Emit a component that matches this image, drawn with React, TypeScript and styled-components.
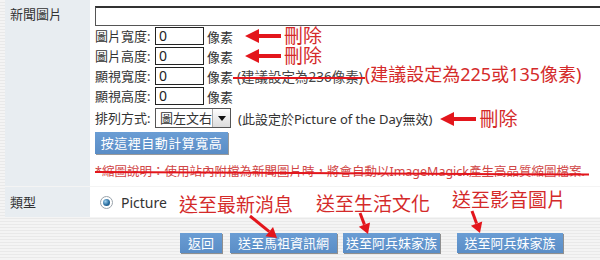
import React from "react";
import styled, { createGlobalStyle } from "styled-components";

const GlobalStyle = createGlobalStyle`
  html, body {
    margin: 0;
    padding: 0;
  }
  body {
    font-family: "Noto Sans", "Noto Sans CJK TC", sans-serif;
    font-size: 13px;
    color: #333;
    background: repeating-linear-gradient(#f4f4f4 0 2px, #e9e9e9 2px 3px);
  }
`;

const Page = styled.div`
  position: relative;
  width: 600px;
  height: 260px;
  overflow: hidden;
`;

const FormTable = styled.div`
  margin-left: 5px;
  display: grid;
  grid-template-columns: 85px 1fr;
  row-gap: 1px;
`;

const LabelCell = styled.div<{ $top: number }>`
  background: #e8edf1;
  padding: ${(p) => p.$top}px 0 0 5px;
  line-height: 19px;
  color: #333;
`;

const ValueCell = styled.div`
  background: #fff;
  padding: 6px 0 6px 5px;
  display: flex;
  flex-direction: column;
  align-items: flex-start;
  overflow: hidden;
`;

const TypeCell = styled.div`
  background: #fff;
  height: 30px;
  padding-left: 10px;
  display: flex;
  align-items: center;
`;

const WideInput = styled.div`
  box-sizing: border-box;
  width: 540px;
  height: 20px;
  border: 1px solid #555;
  border-top: 2px solid #333;
  background: #fff;
`;

const FieldRow = styled.div<{ $h?: number }>`
  display: flex;
  align-items: center;
  height: ${(p) => p.$h ?? 20}px;
  white-space: nowrap;
`;

const FieldLabel = styled.span`
  width: 60px;
  line-height: 18px;
`;

const SmallInput = styled.div`
  box-sizing: border-box;
  width: 49px;
  height: 18px;
  border: 1px solid #222;
  padding-left: 3px;
  line-height: 16px;
  font-size: 14px;
  color: #222;
  background: #fff;
`;

const Unit = styled.span`
  margin-left: 3px;
  color: #333;
`;

const Struck = styled.span`
  position: relative;
  margin-left: 4px;
  margin-right: 2px;
  color: #444;
  font-size: 13.5px;
  &::after {
    content: "";
    position: absolute;
    left: -4px;
    right: -2px;
    top: 11px;
    height: 2px;
    background: #e3161c;
  }
`;

const RedNote = styled.span<{ $size: number; $ml?: number; $dy?: number }>`
  color: #d42a2a;
  font-size: ${(p) => p.$size}px;
  line-height: 20px;
  margin-left: ${(p) => p.$ml ?? 0}px;
  position: relative;
  top: ${(p) => p.$dy ?? 0}px;
  white-space: nowrap;
`;

const Select = styled.div`
  box-sizing: border-box;
  width: 76px;
  height: 20px;
  border: 1px solid #555;
  display: flex;
  align-items: stretch;
  background: #fff;
`;

const SelectText = styled.span`
  flex: 1;
  padding-left: 4px;
  line-height: 18px;
  color: #333;
`;

const SelectButton = styled.span`
  width: 17px;
  border-left: 1px solid #aaa;
  background: linear-gradient(#fdfdfd, #dcdcdc);
  display: flex;
  align-items: center;
  justify-content: center;
  &::before {
    content: "";
    border-left: 4px solid transparent;
    border-right: 4px solid transparent;
    border-top: 5px solid #111;
  }
`;

const Hint = styled.span`
  margin-left: 7px;
  color: #333;
`;

const DeleteMark = styled.span<{ $ml: number; $dy?: number }>`
  display: inline-flex;
  align-items: center;
  margin-left: ${(p) => p.$ml}px;
  position: relative;
  top: ${(p) => p.$dy ?? 0}px;
  gap: 3px;
`;

const CalcButton = styled.div`
  margin-top: 2px;
  height: 22px;
  width: 133px;
  background: linear-gradient(#6a9dd4, #5a8dc6);
  box-shadow: 1px 1px 0 #9a9a9a;
  color: #fff;
  line-height: 22px;
  text-align: center;
  letter-spacing: 0.5px;
`;

const NoteLine = styled.div`
  position: relative;
  margin-top: 10px;
  line-height: 16px;
  font-size: 12.5px;
  color: #d04545;
  white-space: nowrap;
  &::after {
    content: "";
    position: absolute;
    left: 0;
    right: -4px;
    top: 7px;
    height: 2px;
    background: #e3161c;
    transform: rotate(0.3deg);
    transform-origin: left center;
  }
`;

const Radio = styled.span`
  box-sizing: border-box;
  width: 13px;
  height: 13px;
  border-radius: 50%;
  border: 1px solid #9aa3ab;
  background: #fff;
  display: inline-flex;
  align-items: center;
  justify-content: center;
  &::before {
    content: "";
    width: 7px;
    height: 7px;
    border-radius: 50%;
    background: radial-gradient(circle at 35% 35%, #9fd0ee, #2a6ea0 55%, #16456b);
  }
`;

const RadioText = styled.span`
  margin-left: 8px;
  font-size: 14px;
  color: #333;
`;

const ButtonBar = styled.div`
  display: flex;
  margin-top: 16px;
  padding-left: 180px;
`;

const ActionButton = styled.div<{ $w: number; $ml?: number }>`
  width: ${(p) => p.$w}px;
  height: 20px;
  margin-left: ${(p) => p.$ml ?? 0}px;
  background: linear-gradient(#6a9dd4, #5a8dc6);
  box-shadow: 1px 1px 0 #8f8f8f;
  color: #fff;
  line-height: 20px;
  text-align: center;
  white-space: nowrap;
`;

const Callout = styled.span<{ $x: number; $y: number }>`
  position: absolute;
  left: ${(p) => p.$x}px;
  top: ${(p) => p.$y}px;
  color: #d42a2a;
  font-size: 19px;
  line-height: 20px;
  white-space: nowrap;
`;

const Overlay = styled.svg`
  position: absolute;
  left: 0;
  top: 0;
  pointer-events: none;
`;

const RED = "#e3161c";

function LeftArrow() {
  return (
    <svg width="36" height="14" viewBox="0 0 36 14">
      <path d="M0 7 L14 0 L14 5 L36 5 L36 9 L14 9 L14 14 Z" fill={RED} />
    </svg>
  );
}

function Delete({ ml, dy }: { ml: number; dy?: number }) {
  return (
    <DeleteMark $ml={ml} $dy={dy}>
      <LeftArrow />
      <RedNote $size={19}>刪除</RedNote>
    </DeleteMark>
  );
}

const pointers = [
  [250, 216, 277, 238],
  [360, 213, 368, 234],
  [472, 211, 480, 233],
];

function Pointer({ p }: { p: number[] }) {
  const [x1, y1, x2, y2] = p;
  const dx = x2 - x1;
  const dy = y2 - y1;
  const len = Math.hypot(dx, dy);
  const ux = dx / len;
  const uy = dy / len;
  const bx = x2 - ux * 10;
  const by = y2 - uy * 10;
  const head = `M${x2} ${y2} L${bx - uy * 6} ${by + ux * 6} L${bx + uy * 6} ${by - ux * 6} Z`;
  return (
    <g>
      <line x1={x1} y1={y1} x2={bx} y2={by} stroke={RED} strokeWidth={3} />
      <path d={head} fill={RED} />
    </g>
  );
}

export default function App() {
  return (
    <Page>
      <GlobalStyle />
      <FormTable>
        <LabelCell $top={5}>新聞圖片</LabelCell>
        <ValueCell>
          <WideInput />
          <FieldRow>
            <FieldLabel>圖片寬度:</FieldLabel>
            <SmallInput>0</SmallInput>
            <Unit>像素</Unit>
            <Delete ml={12} />
          </FieldRow>
          <FieldRow>
            <FieldLabel>圖片高度:</FieldLabel>
            <SmallInput>0</SmallInput>
            <Unit>像素</Unit>
            <Delete ml={12} />
          </FieldRow>
          <FieldRow>
            <FieldLabel>顯視寬度:</FieldLabel>
            <SmallInput>0</SmallInput>
            <Unit>像素</Unit>
            <Struck>(建議設定為236像素)</Struck>
            <RedNote $size={18} $dy={-2}>(建議設定為225或135像素)</RedNote>
          </FieldRow>
          <FieldRow>
            <FieldLabel>顯視高度:</FieldLabel>
            <SmallInput>0</SmallInput>
            <Unit>像素</Unit>
          </FieldRow>
          <FieldRow $h={24}>
            <FieldLabel>排列方式:</FieldLabel>
            <Select>
              <SelectText>圖左文右</SelectText>
              <SelectButton />
            </Select>
            <Hint>(此設定於Picture of the Day無效)</Hint>
            <Delete ml={8} dy={1} />
          </FieldRow>
          <CalcButton>按這裡自動計算寬高</CalcButton>
          <NoteLine>*縮圖說明：使用站內附檔為新聞圖片時，將會自動以ImageMagick產生高品質縮圖檔案.</NoteLine>
        </ValueCell>
        <LabelCell $top={6}>類型</LabelCell>
        <TypeCell>
          <Radio />
          <RadioText>Picture</RadioText>
          <RedNote $size={19} $ml={12} $dy={3}>送至最新消息</RedNote>
        </TypeCell>
      </FormTable>
      <ButtonBar>
        <ActionButton $w={42}>返回</ActionButton>
        <ActionButton $w={107} $ml={8}>送至馬祖資訊網</ActionButton>
        <ActionButton $w={97} $ml={6}>送至阿兵妹家族</ActionButton>
        <ActionButton $w={106} $ml={17}>送至阿兵妹家族</ActionButton>
      </ButtonBar>
      <Callout $x={316} $y={194}>送至生活文化</Callout>
      <Callout $x={452} $y={190}>送至影音圖片</Callout>
      <Overlay width={600} height={260}>
        {pointers.map((p, i) => (
          <Pointer key={i} p={p} />
        ))}
      </Overlay>
    </Page>
  );
}
